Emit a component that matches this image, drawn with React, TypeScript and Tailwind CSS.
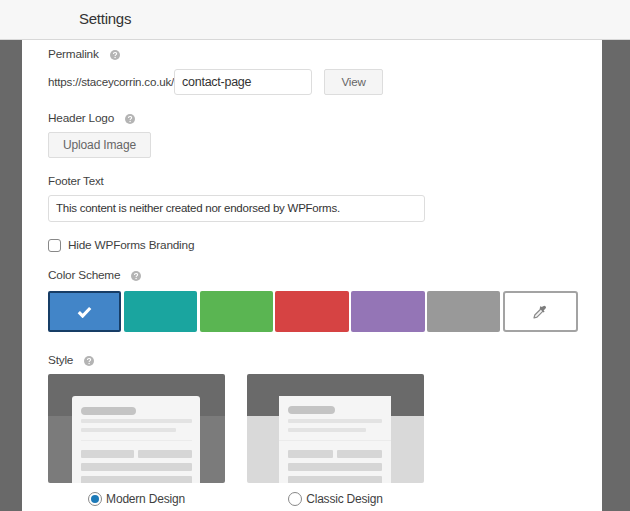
const swatches = [
  { color: "bg-[#4285c8]", extra: "border-2 border-[#173d66]" },
  { color: "bg-[#1aa59f]", extra: "" },
  { color: "bg-[#5ab552]", extra: "" },
  { color: "bg-[#d64343]", extra: "" },
  { color: "bg-[#9475b6]", extra: "" },
  { color: "bg-[#999999]", extra: "" },
];

function Help() {
  return (
    <svg width="10" height="10" viewBox="0 0 11 11" className="shrink-0">
      <circle cx="5.5" cy="5.5" r="5.5" fill="#b4b4b4" />
      <path d="M3.8 4.3c0-2.1 3.5-2.1 3.5-.1 0 1.2-1.7 1.2-1.7 2.4" fill="none" stroke="#fff" strokeWidth="1.2" />
      <circle cx="5.6" cy="8.2" r=".8" fill="#fff" />
    </svg>
  );
}

function Label({ text }: { text: string }) {
  return (
    <div className="flex items-center gap-[11px] h-[18px] text-[11.8px] tracking-[-0.2px] text-[#3f3f3f]">
      <span>{text}</span>
      <Help />
    </div>
  );
}

function ModernThumb() {
  return (
    <svg width="177" height="109" viewBox="0 0 177 109" className="block">
      <defs>
        <clipPath id="m-clip">
          <rect width="177" height="109" rx="2" />
        </clipPath>
      </defs>
      <g clipPath="url(#m-clip)">
        <rect width="177" height="42" fill="#6a6a6a" />
        <rect y="42" width="177" height="67" fill="#7b7b7b" />
        <path d="M24 109V25a3 3 0 0 1 3-3h122a3 3 0 0 1 3 3v84z" fill="#f5f5f5" />
        <rect x="33" y="33" width="55" height="8" rx="4" fill="#c4c4c4" />
        <rect x="33" y="45" width="111" height="4" rx="1" fill="#e3e3e3" />
        <rect x="33" y="54" width="95" height="4" rx="1" fill="#e3e3e3" />
        <rect x="33" y="66" width="111" height="1" fill="#ebebeb" />
        <rect x="33" y="76" width="53" height="8" rx="1" fill="#d6d6d6" />
        <rect x="90" y="76" width="54" height="8" rx="1" fill="#d6d6d6" />
        <rect x="33" y="89" width="111" height="8" rx="1" fill="#d6d6d6" />
        <rect x="33" y="102" width="111" height="8" rx="1" fill="#d6d6d6" />
      </g>
    </svg>
  );
}

function ClassicThumb() {
  return (
    <svg width="177" height="109" viewBox="0 0 177 109" className="block">
      <defs>
        <clipPath id="c-clip">
          <rect width="177" height="109" rx="2" />
        </clipPath>
      </defs>
      <g clipPath="url(#c-clip)">
        <rect width="177" height="42" fill="#6a6a6a" />
        <rect y="42" width="177" height="67" fill="#d9d9d9" />
        <rect x="32" y="22" width="112" height="87" fill="#f5f5f5" />
        <rect x="41" y="32" width="47" height="8" rx="4" fill="#c4c4c4" />
        <rect x="41" y="45" width="94" height="4" rx="1" fill="#e3e3e3" />
        <rect x="41" y="54" width="78" height="4" rx="1" fill="#e3e3e3" />
        <rect x="32" y="66" width="112" height="1" fill="#ebebeb" />
        <rect x="41" y="76" width="45" height="8" rx="1" fill="#d6d6d6" />
        <rect x="90" y="76" width="45" height="8" rx="1" fill="#d6d6d6" />
        <rect x="41" y="89" width="94" height="8" rx="1" fill="#d6d6d6" />
        <rect x="41" y="102" width="94" height="8" rx="1" fill="#d6d6d6" />
      </g>
    </svg>
  );
}

export default function App() {
  return (
    <div className="h-[511px] w-[630px] overflow-hidden flex flex-col bg-[#696969] font-['Liberation_Sans',sans-serif] text-[#3f3f3f]">
      <header className="h-[40px] shrink-0 bg-[#f7f7f7] border-b border-[#d8d8d8] pl-[79px] flex items-center">
        <h1 className="text-[15px] tracking-[-0.25px] text-[#333]">Settings</h1>
      </header>

      <main className="ml-[22px] w-[580px] flex-1 bg-white pl-[26px] pt-[6px]">
        <Label text="Permalink" />

        <div className="flex items-center mt-[5px] h-[26px] text-[11.6px] tracking-[-0.2px]">
          <span className="w-[126px]">https://staceycorrin.co.uk/</span>
          <div className="w-[138px] h-[26px] border border-[#ddd] rounded-[3px] pl-[7px] flex items-center text-[12.5px] tracking-[-0.25px] text-[#333]">
            contact-page
          </div>
          <button className="ml-[12px] w-[59px] h-[26px] bg-[#f5f5f5] border border-[#ddd] rounded-[2px] text-[11.6px] text-[#666]">
            View
          </button>
        </div>

        <div className="mt-[15px]">
          <Label text="Header Logo" />
        </div>
        <button className="block mt-[4px] w-[103px] h-[26px] bg-[#f5f5f5] border border-[#ddd] rounded-[2px] text-[12px] tracking-[-0.15px] text-[#666]">
          Upload Image
        </button>

        <div className="mt-[15px] h-[16px] flex items-center text-[11.6px] tracking-[-0.2px]">Footer Text</div>
        <div className="mt-[6px] w-[377px] h-[27px] border border-[#ddd] rounded-[3px] pl-[7px] flex items-center text-[11.5px] tracking-[-0.25px] text-[#333]">
          This content is neither created nor endorsed by WPForms.
        </div>

        <div className="mt-[17px] h-[13px] flex items-center gap-[7px]">
          <span className="w-[13px] h-[13px] border border-[#888] rounded-[3px] bg-white" />
          <span className="text-[11.8px] tracking-[-0.2px]">Hide WPForms Branding</span>
        </div>

        <div className="mt-[15px]">
          <Label text="Color Scheme" />
        </div>

        <div className="mt-[6px] flex gap-[2.4px] h-[41px]">
          {swatches.map((s) => (
            <div key={s.color} className={`${s.color} ${s.extra} w-[73.4px] rounded-[2px] flex items-center justify-center`}>
              {s.extra && (
                <svg width="15" height="12" viewBox="0 0 15 12" fill="none">
                  <path d="M1.8 6.2 5.6 10 13.2 2" stroke="#fff" strokeWidth="3.2" />
                </svg>
              )}
            </div>
          ))}
          <div className="w-[75px] border-2 border-[#a3a3a3] rounded-[3px] bg-white flex items-center justify-center">
            <svg width="14" height="14" viewBox="0 0 14 14" fill="none">
              <path d="M7.8 4 1.8 10 1 13l3-.8 6-6" fill="#f4f4f4" stroke="#8a8a8a" strokeWidth="1.2" strokeLinejoin="round" />
              <path d="M6.6 3.4l4 4 1-1-1-1 1.9-1.9a1.6 1.6 0 0 0-2.3-2.3L8.6 2.1l-1-1z" fill="#7d7d7d" />
            </svg>
          </div>
        </div>

        <div className="mt-[20px]">
          <Label text="Style" />
        </div>

        <div className="mt-[4px] flex gap-[22px]">
          <div className="w-[177px]">
            <ModernThumb />
            <div className="mt-[7px] flex items-center justify-center gap-[4px] text-[12px] tracking-[-0.2px]">
              <span className="w-[14px] h-[14px] rounded-full border border-[#888] bg-white flex items-center justify-center">
                <span className="w-[8px] h-[8px] rounded-full bg-[#1c7ab8]" />
              </span>
              Modern Design
            </div>
          </div>
          <div className="w-[177px]">
            <ClassicThumb />
            <div className="mt-[7px] flex items-center justify-center gap-[4px] text-[12px] tracking-[-0.2px]">
              <span className="w-[14px] h-[14px] rounded-full border border-[#888] bg-white" />
              Classic Design
            </div>
          </div>
        </div>
      </main>
    </div>
  );
}
